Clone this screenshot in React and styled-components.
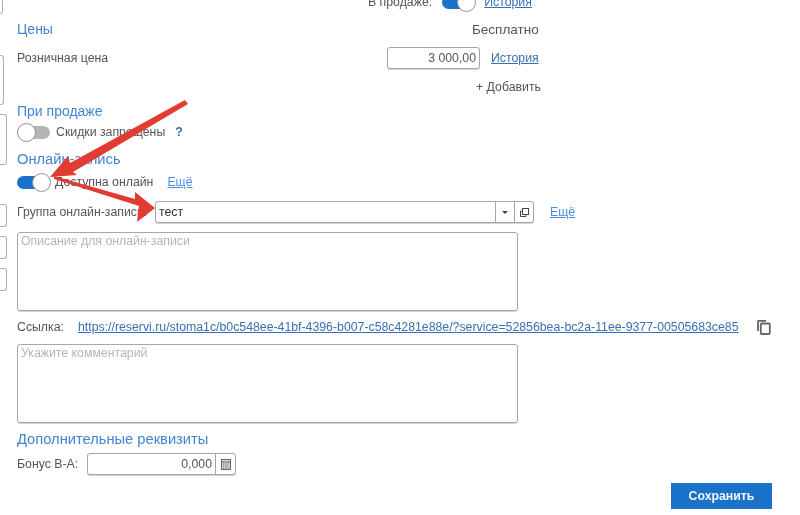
import React from 'react';
import styled, { createGlobalStyle } from 'styled-components';

const GlobalStyle = createGlobalStyle`
  html, body {
    margin: 0;
    padding: 0;
    background: #fff;
  }
  * {
    box-sizing: border-box;
  }
`;

const Page = styled.div`
  position: relative;
  width: 800px;
  height: 515px;
  overflow: hidden;
  display: flex;
  background: #fff;
  color: #555;
  font-family: "Liberation Sans", Arial, sans-serif;
  font-size: 12.3px;
  filter: blur(0.45px);
`;

const Stubs = styled.div`
  width: 17px;
  flex: none;
  display: flex;
  flex-direction: column;
`;

const Stub = styled.div`
  width: ${p => p.w}px;
  height: ${p => p.h}px;
  margin-top: ${p => p.top}px;
  border: 1px solid #b0b0b0;
  border-left: none;
  border-radius: 0 3px 3px 0;
  flex: none;
`;

const Content = styled.div`
  flex: 1;
  display: flex;
  flex-direction: column;
  margin-top: -8px;
`;

const Row = styled.div`
  display: flex;
  align-items: center;
  height: ${p => p.h}px;
  margin-top: ${p => p.top || 0}px;
  justify-content: ${p => (p.end ? 'flex-end' : 'flex-start')};
  flex: none;
`;

const SectionTitle = styled.div`
  color: #4285d2;
  font-size: ${p => p.size || 14.7}px;
  line-height: 16px;
`;

const Spacer = styled.div`
  flex: 1;
`;

const Text = styled.span`
  white-space: nowrap;
  width: ${p => (p.w ? `${p.w}px` : 'auto')};
  margin-left: ${p => p.left || 0}px;
  font-size: ${p => p.size || 12.3}px;
  display: ${p => (p.icon ? 'flex' : 'inline')};
  flex: none;
`;

const Link = styled.a`
  color: ${p => (p.light ? '#4a90e2' : '#3a6fb5')};
  text-decoration: underline;
  white-space: nowrap;
  margin-left: ${p => p.left || 0}px;
  flex: none;
`;

const Help = styled.span`
  color: #1b75bc;
  font-weight: bold;
  margin-left: ${p => p.left}px;
`;

const Track = styled.div`
  position: relative;
  width: 33px;
  height: 13px;
  margin-left: ${p => p.left || 0}px;
  border-radius: 7px;
  background: ${p => (p.on ? '#1b72c9' : '#b5b5b5')};
  flex: none;
`;

const Knob = styled.div`
  position: absolute;
  top: -3px;
  left: ${p => (p.on ? '15px' : '0')};
  width: 19px;
  height: 19px;
  border-radius: 50%;
  background: #fff;
  border: 1.5px solid #929292;
`;

const Toggle = ({ on, left }) => (
  <Track on={on} left={left}>
    <Knob on={on} />
  </Track>
);

const Field = styled.div`
  display: flex;
  align-items: center;
  height: 22px;
  width: ${p => p.w}px;
  margin-left: ${p => p.left || 0}px;
  border: 1px solid #a6a6a6;
  border-radius: 3px;
  box-shadow: 0 1px 0 #d4d4d4;
  background: #fff;
  flex: none;
  overflow: hidden;
`;

const FieldValue = styled.div`
  flex: 1;
  padding: 0 3px;
  text-align: ${p => (p.right ? 'right' : 'left')};
  color: ${p => (p.dark ? '#333' : '#555')};
`;

const FieldButton = styled.div`
  width: ${p => p.w}px;
  height: 100%;
  display: flex;
  align-items: center;
  justify-content: center;
  border-left: 1px solid #a6a6a6;
  flex: none;
`;

const Caret = styled.div`
  width: 0;
  height: 0;
  border-left: 3px solid transparent;
  border-right: 3px solid transparent;
  border-top: 3px solid #444;
`;

const TextArea = styled.div`
  width: 501px;
  height: 79px;
  margin-top: ${p => p.top}px;
  padding: 1px 3px;
  border: 1px solid #a8a8a8;
  border-radius: 3px;
  box-shadow: 0 1px 0 #d4d4d4;
  color: #b5b5b5;
  flex: none;
`;

const SaveButton = styled.button`
  width: 101px;
  height: 26px;
  margin: 0 28px 0 0;
  border: none;
  background: #1b72c9;
  color: #f2f7fc;
  font-family: inherit;
  font-size: 12.3px;
  font-weight: bold;
`;

const Arrows = styled.svg`
  position: absolute;
  left: 0;
  top: 0;
  pointer-events: none;
`;

const CopyWindowIcon = () => (
  <svg width="11" height="11" viewBox="0 0 11 11" fill="none" stroke="#444" strokeWidth="1">
    <rect x="3.5" y="1.5" width="6" height="6" />
    <path d="M3.5 4H1.5v5.5H7V7.5" />
  </svg>
);

const CopyIcon = () => (
  <svg width="14" height="15" viewBox="0 0 14 15" fill="none" stroke="#666" strokeWidth="1.8">
    <path d="M1 11V1.5a.7.7 0 0 1 .7-.7H9" />
    <rect x="3.8" y="3.5" width="9" height="10.5" rx="1" />
  </svg>
);

const CalcIcon = () => (
  <svg width="10" height="11" viewBox="0 0 10 11" fill="#d8d8d8" stroke="#666">
    <rect x="0.5" y="0.5" width="9" height="10" />
    <path d="M0.5 3h9" />
    <path d="M2 5h6M2 7h6M2 9h6" strokeDasharray="1.2 1" />
  </svg>
);

const LINK =
  'https://reservi.ru/stoma1c/b0c548ee-41bf-4396-b007-c58c4281e88e/?service=52856bea-bc2a-11ee-9377-00505683ce85';

export default function App() {
  return (
    <Page>
      <GlobalStyle />
      <Stubs>
        <Stub w={3} h={25} top={-11} />
        <Stub w={4} h={50} top={41} />
        <Stub w={7} h={51} top={9} />
        <Stub w={7} h={23} top={39} />
        <Stub w={7} h={23} top={9} />
        <Stub w={7} h={23} top={9} />
      </Stubs>
      <Content>
        <Row h={20}>
          <Text left={351}>В продаже:</Text>
          <Toggle on left={10} />
          <Link left={9}>История</Link>
        </Row>
        <Row h={18} top={8}>
          <SectionTitle size={14}>Цены</SectionTitle>
          <Spacer />
          <Text w={328} size={13.5}>Бесплатно</Text>
        </Row>
        <Row h={22} top={9}>
          <Text w={370}>Розничная цена</Text>
          <Field w={93}>
            <FieldValue right>3 000,00</FieldValue>
          </Field>
          <Link left={11}>История</Link>
        </Row>
        <Row h={18} top={9}>
          <Text left={459}>+ Добавить</Text>
        </Row>
        <Row h={18} top={6}>
          <SectionTitle size={14}>При продаже</SectionTitle>
        </Row>
        <Row h={18} top={3}>
          <Toggle />
          <Text left={6}>Скидки запрещены</Text>
          <Help left={10}>?</Help>
        </Row>
        <Row h={18} top={9}>
          <SectionTitle>Онлайн-запись</SectionTitle>
        </Row>
        <Row h={18} top={5}>
          <Toggle on />
          <Text left={5}>Доступна онлайн</Text>
          <Link light left={14}>Ещё</Link>
        </Row>
        <Row h={22} top={10}>
          <Text w={138}>Группа онлайн-записи:</Text>
          <Field w={379}>
            <FieldValue dark>тест</FieldValue>
            <FieldButton w={19}><Caret /></FieldButton>
            <FieldButton w={19}><CopyWindowIcon /></FieldButton>
          </Field>
          <Link light left={16}>Ещё</Link>
        </Row>
        <TextArea top={9}>Описание для онлайн-записи</TextArea>
        <Row h={18} top={7}>
          <Text w={61}>Ссылка:</Text>
          <Link>{LINK}</Link>
          <Text left={18} icon><CopyIcon /></Text>
        </Row>
        <TextArea top={8}>Укажите комментарий</TextArea>
        <Row h={18} top={7}>
          <SectionTitle>Дополнительные реквизиты</SectionTitle>
        </Row>
        <Row h={22} top={5}>
          <Text w={70}>Бонус В-А:</Text>
          <Field w={149}>
            <FieldValue right>0,000</FieldValue>
            <FieldButton w={20}><CalcIcon /></FieldButton>
          </Field>
        </Row>
        <Row h={26} top={8} end>
          <SaveButton>Сохранить</SaveButton>
        </Row>
      </Content>
      <Arrows width="800" height="515" viewBox="0 0 800 515">
        <path d="M185 100L188 104L73 172L77 175L50 177L68 156L70 163Z" fill="#e03c31" />
        <path d="M54 176L135 199L135 192L155 208L137 222L139 206L54 179Z" fill="#e03c31" />
      </Arrows>
    </Page>
  );
}
